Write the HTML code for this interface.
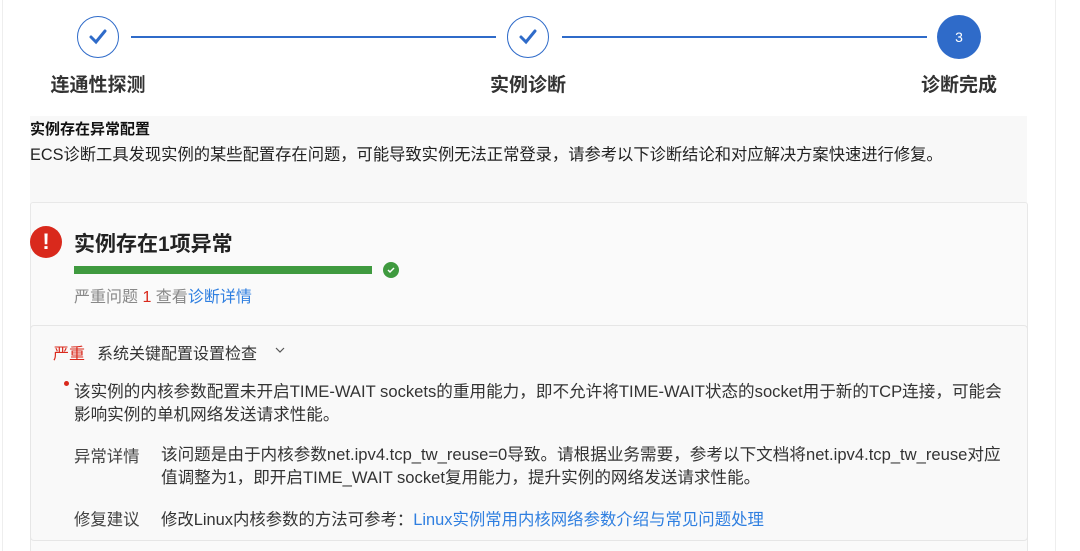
<!DOCTYPE html>
<html><head><meta charset="utf-8"><style>
html,body{margin:0;width:1080px;height:551px;overflow:hidden}
body{background:#fff;font-family:"Liberation Sans","Noto Sans CJK SC",sans-serif;position:relative;color:#333}
.a{position:absolute;white-space:nowrap}
.circ{position:absolute;width:42px;height:42px;border:1.5px solid #2f6bc9;border-radius:50%;box-sizing:border-box;background:#fff}
.line{position:absolute;height:2px;background:#2f6bc9;top:36px}
.lab{position:absolute;top:70px;font-size:19px;color:#333;width:200px;text-align:center;font-weight:bold}
</style></head><body>
<div class="a" style="left:2px;top:0;width:1px;height:551px;background:#eee"></div>
<div class="a" style="left:1055px;top:0;width:1px;height:551px;background:#eee"></div>
<div class="circ" style="left:77px;top:16px"><svg width="40" height="40" style="position:absolute;left:0;top:0"><path d="M13 20 L18 25 L27 14" stroke="#2f6bc9" stroke-width="3" fill="none" stroke-linecap="round"/></svg></div>
<div class="circ" style="left:507px;top:16px"><svg width="40" height="40" style="position:absolute;left:0;top:0"><path d="M13 20 L18 25 L27 14" stroke="#2f6bc9" stroke-width="3" fill="none" stroke-linecap="round"/></svg></div>
<div class="a" style="left:937px;top:15px;width:44px;height:44px;border-radius:50%;background:#2f6bc9;color:#fff;font-size:14px;text-align:center;line-height:44px">3</div>
<div class="line" style="left:131px;width:365px"></div>
<div class="line" style="left:562px;width:365px"></div>
<div class="lab" style="left:-2px">连通性探测</div>
<div class="lab" style="left:428px">实例诊断</div>
<div class="lab" style="left:859px">诊断完成</div>
<div class="a" style="left:30px;top:116px;width:997px;height:435px;background:#f8f8f8"></div>
<div class="a" style="left:30px;top:118px;font-size:15px;font-weight:bold;color:#111">实例存在异常配置</div>
<div class="a" style="left:30px;top:141px;font-size:16.3px;color:#222">ECS诊断工具发现实例的某些配置存在问题，可能导致实例无法正常登录，请参考以下诊断结论和对应解决方案快速进行修复。</div>
<div class="a" style="left:30px;top:202px;width:996px;height:360px;border:1px solid #e8e8e8;border-radius:3px;background:#fafafa"></div>
<div class="a" style="left:30px;top:226px;width:32px;height:32px;border-radius:50%;background:#d9291c;color:#fff;font-weight:bold;font-size:22px;text-align:center;line-height:32px">!</div>
<div class="a" style="left:74px;top:228px;font-size:21px;color:#222;font-weight:bold">实例存在1项异常</div>
<div class="a" style="left:74px;top:266px;width:298px;height:8px;background:#3f9a3f"></div>
<div class="a" style="left:383px;top:262px;width:16px;height:16px;border-radius:50%;background:#3f9a3f"><svg width="16" height="16" style="position:absolute"><path d="M5 8 L7 10 L11 6" stroke="#fff" stroke-width="1.5" fill="none"/></svg></div>
<div class="a" style="left:74px;top:283px;font-size:16px;color:#888">严重问题 <span style="color:#d9291c">1</span> 查看<span style="color:#2f7fe0">诊断详情</span></div>
<div class="a" style="left:30px;top:325px;width:996px;height:214px;border:1px solid #e6e6e6;border-radius:4px;background:#f9f9f9"></div>
<div class="a" style="left:53px;top:340px;font-size:16px;color:#d9291c">严重</div>
<div class="a" style="left:97px;top:340px;font-size:16px;color:#333">系统关键配置设置检查</div>
<svg class="a" style="left:274px;top:346px" width="12" height="8"><path d="M2 2 L6 6 L10 2" stroke="#555" stroke-width="1.2" fill="none"/></svg>
<div class="a" style="left:64px;top:381px;width:5px;height:5px;border-radius:50%;background:#d9291c"></div>
<div class="a" style="left:74px;top:380px;font-size:16.6px;color:#333;line-height:23px">该实例的内核参数配置未开启TIME-WAIT sockets的重用能力，即不允许将TIME-WAIT状态的socket用于新的TCP连接，可能会<br>影响实例的单机网络发送请求性能。</div>
<div class="a" style="left:74px;top:443px;font-size:16.4px;color:#444">异常详情</div>
<div class="a" style="left:161px;top:443px;font-size:16.6px;color:#333;line-height:23px">该问题是由于内核参数net.ipv4.tcp_tw_reuse=0导致。请根据业务需要，参考以下文档将net.ipv4.tcp_tw_reuse对应<br>值调整为1，即开启TIME_WAIT socket复用能力，提升实例的网络发送请求性能。</div>
<div class="a" style="left:74px;top:506px;font-size:16.4px;color:#444">修复建议</div>
<div class="a" style="left:161px;top:506px;font-size:16.4px;color:#333">修改Linux内核参数的方法可参考：<span style="color:#2f7fe0">Linux实例常用内核网络参数介绍与常见问题处理</span></div>
</body></html>
